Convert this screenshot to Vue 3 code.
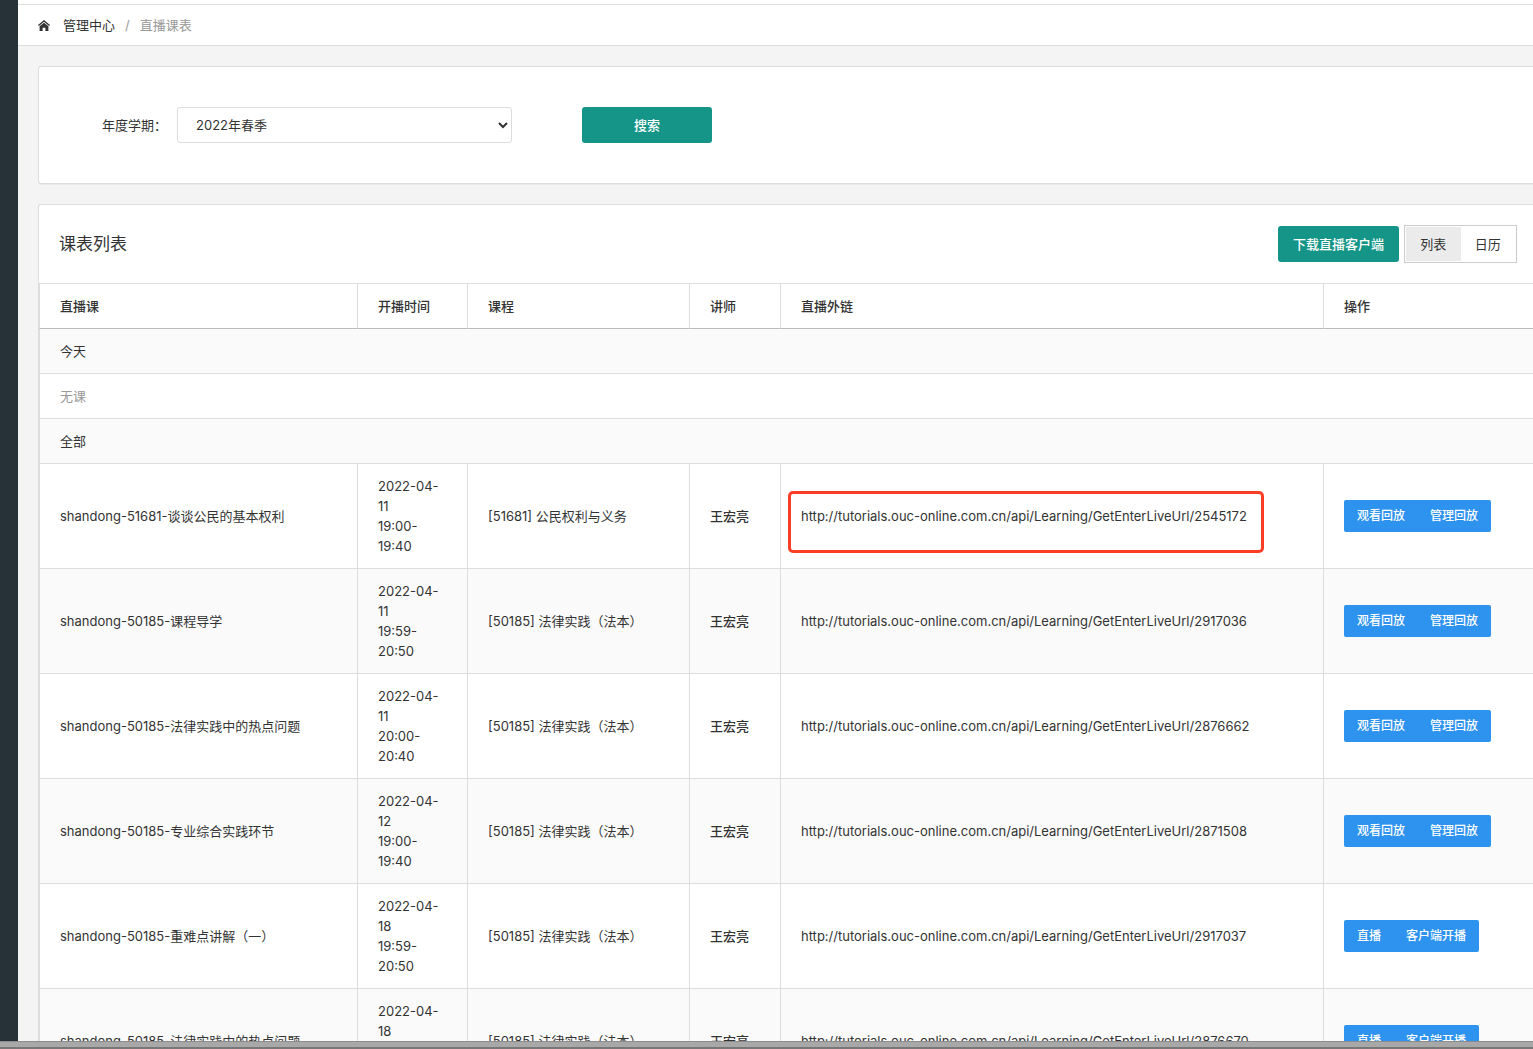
<script setup>
import { ref } from 'vue'

const term = ref('2022年春季')
const view = ref('list')

const replay = ['观看回放', '管理回放']
const live = ['直播', '客户端开播']
const base = 'http://tutorials.ouc-online.com.cn/api/Learning/GetEnterLiveUrl/'

const lessons = [
  { name: 'shandong-51681-谈谈公民的基本权利', date: '2022-04-11', time: '19:00-19:40', course: '[51681] 公民权利与义务', id: 2545172, actions: replay, marked: true },
  { name: 'shandong-50185-课程导学', date: '2022-04-11', time: '19:59-20:50', course: '[50185] 法律实践（法本）', id: 2917036, actions: replay },
  { name: 'shandong-50185-法律实践中的热点问题', date: '2022-04-11', time: '20:00-20:40', course: '[50185] 法律实践（法本）', id: 2876662, actions: replay },
  { name: 'shandong-50185-专业综合实践环节', date: '2022-04-12', time: '19:00-19:40', course: '[50185] 法律实践（法本）', id: 2871508, actions: replay },
  { name: 'shandong-50185-重难点讲解（一）', date: '2022-04-18', time: '19:59-20:50', course: '[50185] 法律实践（法本）', id: 2917037, actions: live },
  { name: 'shandong-50185-法律实践中的热点问题', date: '2022-04-18', time: '20:00-20:40', course: '[50185] 法律实践（法本）', id: 2876670, actions: live }
]
</script>

<template>
  <div class="app">
    <div class="body">
      <aside class="sidebar"></aside>
      <main class="main">
        <nav class="crumbs">
          <a href="#" class="home">
            <svg width="12" height="12" viewBox="0 0 12 12" aria-hidden="true">
              <path d="M6 0.9 12 5.9 11.1 7 6 2.8 0.9 7 0 5.9Z" fill="#333" />
              <path d="M6 3.7 10.4 7.3V12H7.4V8.8H4.6V12H1.6V7.3Z" fill="#333" />
            </svg>
            <span>管理中心</span>
          </a>
          <span class="sep">/</span>
          <span class="current">直播课表</span>
        </nav>

        <div class="content">
          <form class="card search" @submit.prevent>
            <label for="term">年度学期：</label>
            <select id="term" v-model="term">
              <option>2022年春季</option>
            </select>
            <button type="submit" class="btn-teal">搜索</button>
          </form>

          <section class="card">
            <header class="card-head">
              <h1>课表列表</h1>
              <button type="button" class="btn-teal download">下载直播客户端</button>
              <div class="toggle">
                <button type="button" :class="{ active: view === 'list' }" @click="view = 'list'">列表</button>
                <button type="button" :class="{ active: view === 'calendar' }" @click="view = 'calendar'">日历</button>
              </div>
            </header>
            <table>
              <colgroup>
                <col class="c-name" /><col class="c-time" /><col class="c-course" />
                <col class="c-teacher" /><col /><col class="c-actions" />
              </colgroup>
              <thead>
                <tr>
                  <th>直播课</th><th>开播时间</th><th>课程</th><th>讲师</th><th>直播外链</th><th>操作</th>
                </tr>
              </thead>
              <tbody>
                <tr class="group"><td colspan="6">今天</td></tr>
                <tr><td colspan="6" class="muted">无课</td></tr>
                <tr class="group"><td colspan="6">全部</td></tr>
                <tr v-for="(l, i) in lessons" :key="i" :class="{ striped: i % 2 === 1 }">
                  <td>{{ l.name }}</td>
                  <td>{{ l.date }}<br />{{ l.time }}</td>
                  <td class="nowrap">{{ l.course }}</td>
                  <td class="teacher">王宏亮</td>
                  <td class="nowrap">
                    <span class="link">{{ base }}{{ l.id }}<i v-if="l.marked" class="mark"></i></span>
                  </td>
                  <td>
                    <div class="actions">
                      <button v-for="a in l.actions" :key="a" type="button">{{ a }}</button>
                    </div>
                  </td>
                </tr>
              </tbody>
            </table>
          </section>
        </div>
      </main>
    </div>
    <div class="edge"></div>
  </div>
</template>

<style>
body {
  margin: 0;
  overflow: hidden;
}
</style>

<style scoped>
.app {
  display: flex;
  flex-direction: column;
  height: 100vh;
  color: #333;
  font: 13px/20px Inter, "Noto Sans CJK SC", sans-serif;
}
.app * {
  box-sizing: border-box;
}
.body {
  flex: 1;
  min-height: 0;
  display: flex;
  overflow: hidden;
  background: #f4f4f4;
}
.sidebar {
  flex: 0 0 18px;
  background: #263238;
}
.main {
  flex: 1;
  min-width: 0;
}
.crumbs {
  display: flex;
  align-items: center;
  gap: 10px;
  height: 42px;
  margin-top: 4px;
  padding-left: 20px;
  background: #fff;
  border-top: 1px solid #ddd;
  border-bottom: 1px solid #ddd;
  box-shadow: 0 -4px #fff;
}
.home {
  display: flex;
  align-items: center;
  gap: 13px;
  color: #333;
  text-decoration: none;
}
.sep,
.current,
.muted {
  color: #999;
}
.content {
  display: flex;
  flex-direction: column;
  gap: 20px;
  padding: 20px 0 0 20px;
}
.card {
  background: #fff;
  border: 1px solid #ddd;
  border-right: 0;
  border-radius: 3px 0 0 3px;
  box-shadow: 0 1px 1px rgba(0, 0, 0, 0.05);
}
.search {
  display: flex;
  align-items: center;
  padding: 40px 63px;
}
button,
select {
  font: inherit;
  color: inherit;
}
button {
  padding: 0;
  border: 0;
  cursor: pointer;
}
.search select {
  width: 335px;
  height: 36px;
  margin: 0 70px 0 10px;
  padding: 0 0 0 14px;
  background: #fff;
  border: 1px solid #ddd;
  border-radius: 3px;
}
.btn-teal {
  width: 130px;
  height: 36px;
  color: #fff;
  font-weight: 500;
  background: #159588;
  border-radius: 3px;
}
.card-head {
  display: flex;
  align-items: center;
  gap: 5px;
  height: 78px;
  padding: 0 16px 0 20px;
}
h1 {
  flex: 1;
  margin: 0;
  font-size: 17px;
  font-weight: 400;
}
.download {
  width: 121px;
}
.toggle {
  display: flex;
  width: 113px;
  padding: 1px;
  border: 1px solid #ccc;
}
.toggle button {
  flex: 1 1 55px;
  height: 34px;
  background: #fff;
}
.toggle .active {
  background: #ebebeb;
}
table {
  width: 100%;
  table-layout: fixed;
  border-collapse: separate;
  border-spacing: 0;
}
.c-name { width: 318px; }
.c-time { width: 110px; }
.c-course { width: 222px; }
.c-teacher { width: 91px; }
.c-actions { width: 210px; }
th,
td {
  padding: 12px 20px;
  text-align: left;
  vertical-align: middle;
  border-left: 1px solid #ddd;
  border-bottom: 1px solid #ddd;
}
th {
  font-weight: 500;
  border-top: 1px solid #ddd;
  border-bottom-color: #bbb;
}
.group,
.striped {
  background: #fafafa;
}
.nowrap {
  white-space: nowrap;
}
.teacher {
  font-weight: 500;
}
.link {
  position: relative;
}
.mark {
  position: absolute;
  inset: -17px -17px -29px -13px;
  border: 3px solid #f93e25;
  border-radius: 5px;
}
.actions {
  display: inline-flex;
  vertical-align: middle;
  padding-right: 1px;
  background: #2e93ee;
  border-radius: 2px;
}
.actions button {
  height: 32px;
  padding: 0 12px 0 13px;
  color: #fff;
  font-size: 12px;
  font-weight: 500;
  background: transparent;
}
.edge {
  flex: 0 0 8px;
  background: #a8a8a8;
  border-top: 1px solid #8c8c8c;
  border-bottom: 2px solid #777;
}
</style>
